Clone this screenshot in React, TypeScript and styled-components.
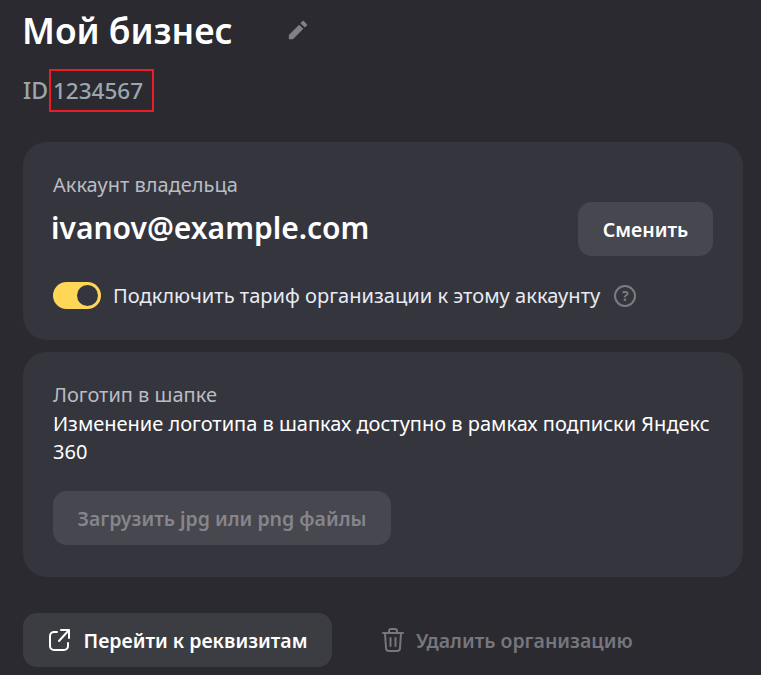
import React from 'react'
import styled, { createGlobalStyle } from 'styled-components'

const Global = createGlobalStyle`
  html, body {
    margin: 0;
    background: #2a2a30;
    font-family: "Noto Sans", "Liberation Sans", sans-serif;
    overflow: hidden;
  }
`

const Page = styled.div`
  width: 761px;
  height: 675px;
  box-sizing: border-box;
  padding: 8px 18px 0 23px;
  overflow: hidden;
`

const TitleRow = styled.div`
  display: flex;
  align-items: center;
  height: 44px;
`

const Title = styled.h1`
  margin: -1px 0 0 -1px;
  width: 265px;
  font-size: 35.4px;
  line-height: 44px;
  font-weight: 600;
  color: #fff;
`

const IdRow = styled.div`
  display: flex;
  align-items: center;
  height: 46px;
  margin-top: 15px;
  margin-bottom: 29px;
  font-size: 23px;
  color: #9aa7af;
`

const IdLabel = styled.span`
  font-weight: 500;
  margin-right: 1px;
`

const IdBox = styled.span`
  display: flex;
  align-items: center;
  height: 43px;
  width: 105px;
  padding-left: 2px;
  border: 2px solid #ed1c24;
  box-sizing: border-box;
  font-size: 22.5px;
  font-weight: 500;
`

const Card = styled.section<{ $height: number }>`
  height: ${p => p.$height}px;
  box-sizing: border-box;
  background: #35353e;
  border-radius: 24px;
  padding: 30px 30px 0;
  margin-bottom: 12px;
`

const Caption = styled.div`
  font-size: 20px;
  line-height: 26px;
  color: #b9bcc4;
`

const OwnerRow = styled.div`
  display: flex;
  align-items: center;
  justify-content: space-between;
  margin-top: 4px;
`

const Email = styled.div`
  font-size: 30px;
  font-weight: 600;
  color: #fff;
  margin-left: -2px;
  margin-top: -3px;
`

const Button = styled.button<{ $width: number; $bg: string; $color: string }>`
  display: flex;
  align-items: center;
  justify-content: center;
  gap: 12px;
  width: ${p => p.$width}px;
  height: 54px;
  border: 0;
  border-radius: 14px;
  background: ${p => p.$bg};
  color: ${p => p.$color};
  font-family: inherit;
  font-size: 19.5px;
  font-weight: 600;
  padding: 0;
`

const ToggleRow = styled.div`
  display: flex;
  align-items: center;
  margin-top: 26px;
  font-size: 20.1px;
  color: #e8ebf2;
`

const Toggle = styled.span`
  display: flex;
  justify-content: flex-end;
  align-items: center;
  width: 48px;
  height: 27px;
  box-sizing: border-box;
  padding: 0 3px;
  border-radius: 14px;
  background: #ffd757;
  margin-right: 12px;
`

const Knob = styled.span`
  width: 21px;
  height: 21px;
  border-radius: 50%;
  background: #35353e;
`

const Help = styled.span`
  display: flex;
  align-items: center;
  justify-content: center;
  width: 22px;
  height: 22px;
  box-sizing: border-box;
  margin-left: 14px;
  border: 2px solid #7b7b82;
  border-radius: 50%;
  color: #7b7b82;
  font-size: 14px;
  font-weight: 700;
`

const Text = styled.p`
  margin: 2px 0 25px;
  font-size: 20px;
  line-height: 28px;
  color: #fff;
`

const Actions = styled.div`
  display: flex;
  align-items: center;
  margin-top: 36px;
`

const DeleteAction = styled.div`
  display: flex;
  align-items: center;
  gap: 11px;
  margin-left: 49px;
  font-size: 19.5px;
  font-weight: 600;
  color: #76767c;
`

const Pencil = () => (
  <svg width="22" height="22" viewBox="0 0 24 24" fill="#808086">
    <path d="M2 17.5V22h4.5L17.81 10.69l-4.5-4.5L2 17.5zM21.71 7.04a1 1 0 0 0 0-1.41l-3.34-3.34a1 1 0 0 0-1.41 0l-2.33 2.33 4.75 4.75 2.33-2.33z" />
  </svg>
)

const OpenIcon = () => (
  <svg width="24" height="24" viewBox="0 0 24 24" fill="none" stroke="#fff" strokeWidth="2" strokeLinecap="round" strokeLinejoin="round">
    <path d="M9 4H6a4 4 0 0 0-4 4v10a4 4 0 0 0 4 4h10a4 4 0 0 0 4-4v-3" />
    <path d="M13 2h8v8M21 2L11 13" />
  </svg>
)

const TrashIcon = () => (
  <svg width="24" height="26" viewBox="0 0 24 26" fill="none" stroke="#76767c" strokeWidth="2" strokeLinecap="round" strokeLinejoin="round">
    <path d="M2 6h20M8 6V4a2 2 0 0 1 2-2h4a2 2 0 0 1 2 2v2" />
    <path d="M4 6l1 15a3 3 0 0 0 3 3h8a3 3 0 0 0 3-3l1-15" />
    <path d="M9.5 11v8M14.5 11v8" />
  </svg>
)

export default function App() {
  return (
    <Page>
      <Global />
      <TitleRow>
        <Title>Мой бизнес</Title>
        <Pencil />
      </TitleRow>
      <IdRow>
        <IdLabel>ID</IdLabel>
        <IdBox>1234567</IdBox>
      </IdRow>
      <Card $height={198}>
        <Caption>Аккаунт владельца</Caption>
        <OwnerRow>
          <Email>ivanov@example.com</Email>
          <Button $width={135} $bg="#47474f" $color="#fff">Сменить</Button>
        </OwnerRow>
        <ToggleRow>
          <Toggle><Knob /></Toggle>
          Подключить тариф организации к этому аккаунту
          <Help>?</Help>
        </ToggleRow>
      </Card>
      <Card $height={225}>
        <Caption>Логотип в шапке</Caption>
        <Text>Изменение логотипа в шапках доступно в рамках подписки Яндекс 360</Text>
        <Button $width={338} $bg="#47474f" $color="#85858b">Загрузить jpg или png файлы</Button>
      </Card>
      <Actions>
        <Button $width={309} $bg="#3c3c43" $color="#fff">
          <OpenIcon />
          Перейти к реквизитам
        </Button>
        <DeleteAction>
          <TrashIcon />
          Удалить организацию
        </DeleteAction>
      </Actions>
    </Page>
  )
}
